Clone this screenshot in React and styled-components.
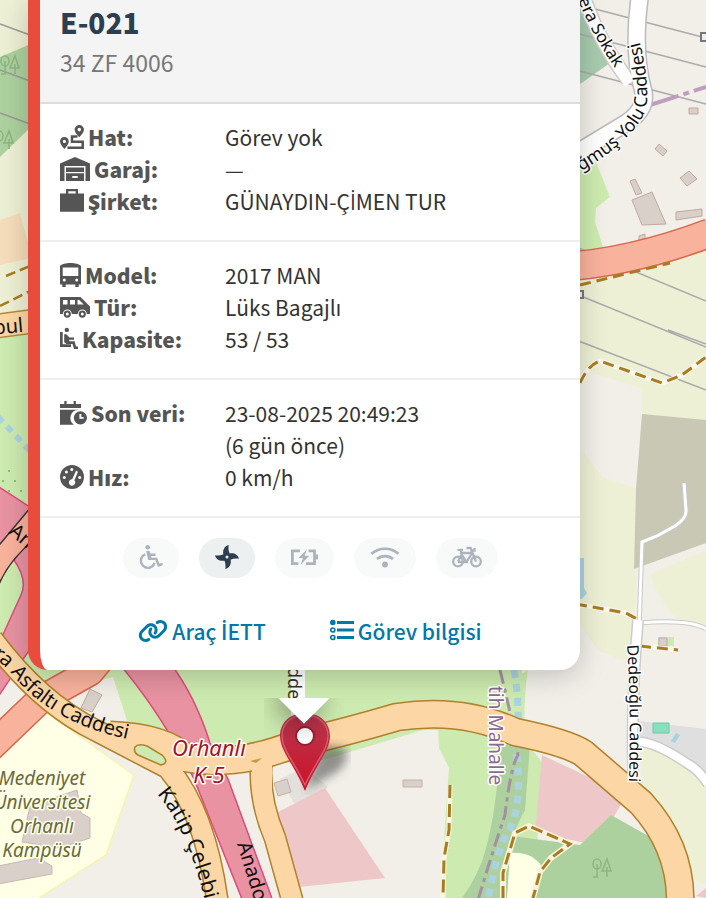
import React from 'react'
import styled, { createGlobalStyle } from 'styled-components'
import { FaLink } from 'react-icons/fa6'

const GlobalStyle = createGlobalStyle`
  * { box-sizing: border-box; }
  body {
    margin: 0;
    background: #f2efe9;
    font-family: "Noto Sans CJK SC", "Noto Sans", sans-serif;
    color: #333;
  }
`

const Page = styled.main`
  position: relative;
  min-height: 100vh;
  overflow: hidden;
`

const MapLayer = styled.svg`
  position: absolute;
  inset: 0;
  width: 100%;
  height: 100%;
  font-family: "Noto Sans", sans-serif;
`

const Popup = styled.div`
  position: relative;
  margin: 0 126px 0 28px;
`

const Card = styled.article`
  background: #fff;
  border-left: 12px solid #e74c3c;
  border-radius: 0 0 20px 20px;
  overflow: hidden;
  box-shadow: 0 6px 28px rgba(0, 0, 0, 0.2);
`

const Header = styled.header`
  padding: 6px 20px 24px;
  background: #f4f4f4;
  border-bottom: 2px solid #ddd;
`

const Title = styled.h1`
  margin: 0 0 8px;
  font-size: 28px;
  line-height: 32px;
  font-weight: 900;
  color: #2c3e50;
`

const Plate = styled.div`
  font-size: 23px;
  line-height: 32px;
  color: #777;
`

const Details = styled.dl`
  margin: 0;
  padding: 17px 20px 23px;
  border-bottom: 2px solid #eee;
  display: grid;
  grid-template-columns: 165px 1fr;
  font-size: 21px;
  line-height: 32px;
`

const Label = styled.dt`
  display: flex;
  align-items: flex-start;
  gap: 4px;
  font-weight: 900;
  color: #555;
  white-space: nowrap;
`

const Value = styled.dd`
  margin: 0;
`

const DottedI = styled.span`
  font-family: "Open Sans", sans-serif;
  font-weight: ${p => p.$weight || 400};
  line-height: 1;
`

const Glyph = styled.svg`
  flex-shrink: 0;
  height: 24px;
  width: ${p => p.$w}px;
  margin-top: 4px;
  fill: currentColor;
`

const Features = styled.ul`
  list-style: none;
  margin: 0;
  padding: 20px 20px 37px;
  display: flex;
  justify-content: center;
  gap: 20px;
`

const Pill = styled.li`
  height: 40px;
  padding: 3px 16px;
  border-radius: 20px;
  background: ${p => p.$on ? '#ecf0f1' : '#f8faf9'};
  color: ${p => p.$on ? '#2c3e50' : '#abb4bd'};
`

const Links = styled.nav`
  display: flex;
  justify-content: center;
  gap: 64px;
  padding: 0 20px 23px;
`

const Link = styled.a`
  display: flex;
  gap: 4px;
  font-size: 21px;
  line-height: 32px;
  font-weight: 500;
  color: #0078a8;
  text-decoration: none;
`

const TipBox = styled.div`
  width: 80px;
  height: 40px;
  margin: 28px auto 0;
  overflow: hidden;
`

const Tip = styled.div`
  width: 38px;
  height: 38px;
  margin: -20px auto 0;
  background: #fff;
  transform: rotate(45deg);
  box-shadow: 0 6px 28px rgba(0, 0, 0, 0.4);
`

const BLADE = 'M12 12 8.300 9.300C7.500 5 9.500 1 13.700 0c-.5 3-.3 5.800 1 8.500z'

const ICONS = {
  route: [24, <>
    <path fillRule="evenodd" d="M19.300 0a4.700 4.700 0 0 1 4.700 4.700c0 2.300-2.600 5.400-4.700 7.600-2.100-2.200-4.700-5.300-4.700-7.600A4.700 4.700 0 0 1 19.300 0zm0 2.800a1.800 1.800 0 1 0 0 3.600 1.800 1.800 0 0 0 0-3.600zM4.400 12a4.400 4.400 0 0 1 4.400 4.400c0 2.200-2.300 5.300-4.400 7.600C2.300 21.700 0 18.600 0 16.400A4.400 4.400 0 0 1 4.400 12zm0 2.800a1.600 1.600 0 1 0 0 3.200 1.600 1.600 0 0 0 0-3.200z" />
    <path d="M17.500 11.500H12v5.300h10.700v6H7.500" fill="none" stroke="currentColor" strokeWidth="2.500" />
  </>],
  warehouse: [30, <path fillRule="evenodd" d="M0 6.500 15 0l15 6.500V24h-4.500V9h-21v15H0zM6 10.500h18V15H6zM6 16.300h18V24H6zm6.300 2.700v2h5.400v-2z" />],
  briefcase: [24, <path fillRule="evenodd" d="M6 0h12v4.500h6V15H0V4.500h6zm2.300 2.200v2.300h7.400V2.200zM0 15h24v7.700H0z" />],
  bus: [21, <path fillRule="evenodd" d="M0 3C3-1 18-1 21 3v18.500h-2.300V24h-3.400v-2.500H5.700V24H2.300v-2.500H0zm2.700 1.500V13h15.600V4.500zM4.300 15.500a1.500 1.500 0 1 0 0 3 1.500 1.500 0 0 0 0-3zm12.400 0a1.500 1.500 0 1 0 0 3 1.500 1.500 0 0 0 0-3z" />],
  van: [30, <>
    <path fillRule="evenodd" d="M0 2h20.500L30 11.500V19h-3.200a4.500 4.500 0 0 0-9 0h-6a4.500 4.500 0 0 0-9 0H0zm3 3v4.500h4.500V5zm7 0v4.500h5V5zm7.500 0v4.500h6.200L19.300 5z" />
    <path fillRule="evenodd" d="M7.300 15.500a3.600 3.600 0 1 1 0 7.200 3.600 3.600 0 0 1 0-7.200zm0 2.100a1.500 1.500 0 1 0 0 3 1.500 1.500 0 0 0 0-3zM22.300 15.500a3.600 3.600 0 1 1 0 7.200 3.600 3.600 0 0 1 0-7.200zm0 2.100a1.500 1.500 0 1 0 0 3 1.500 1.500 0 0 0 0-3z" />
  </>],
  seat: [18, <>
    <circle cx="6.800" cy="2.900" r="2.200" />
    <path d="M0 5h2.700v12.300H11V20H0zM4.200 7.300h2.200l3 3.200H14v2.300H9.300v1.500h5.300l1.400 5.200h2V22h-4l-1.500-5H6.400l-2.200-1.800z" />
  </>],
  calendar: [27, <>
    <path d="M4.300 0h2.300v3h7V0h2.300v3H21v4H0V3h4.300zM0 8.800h18.500a8.200 8.200 0 0 0-4.600 14.900H0z" />
    <path fillRule="evenodd" d="M20.400 10.200a6.600 6.600 0 1 1 0 13.200 6.600 6.600 0 0 1 0-13.200zm-1 2.800v4.800h4.200v-1.900h-2.300V13z" />
  </>],
  gauge: [24, <>
    <circle cx="12" cy="12" r="12" />
    <g fill="#fff">
      <circle cx="4.300" cy="12.500" r="1.500" /><circle cx="6.400" cy="7" r="1.500" />
      <circle cx="11.800" cy="4.600" r="1.500" /><circle cx="19.700" cy="12.500" r="1.500" />
      <path d="m16 5.800 2 1-3.600 8.500a3.200 3.200 0 1 1-2.200-1z" />
    </g>
  </>],
  wheelchair: [24, <>
    <circle cx="8.700" cy="2.300" r="2.300" />
    <path d="M7.200 6h3.400l.7 2.600h5.200v2.300h-4.600l.5 1.900h5.700l2.300 6 2.800-1 .8 2.300-5 1.900-2.700-6.900H9.200z" />
    <path d="M6.300 9.300a7 7 0 1 0 9.300 8.600" fill="none" stroke="currentColor" strokeWidth="2.300" />
  </>],
  fan: [24, <>
    {[0, 90, 180, 270].map(a => <path key={a} d={BLADE} transform={`rotate(${a} 12 12)`} />)}
    <circle cx="12" cy="12" r="4" />
    <circle cx="12" cy="12" r="1.500" fill="#ecf0f1" />
  </>],
  battery: [27, <>
    <path d="M9 5.800H1.400v12.800h6M17.500 5.800h6v12.800H15" fill="none" stroke="currentColor" strokeWidth="2.800" />
    <path d="M24.500 9.500H27v5h-2.500zM15.800 4.400 7.500 13h4.400l-2.300 6.800 8.700-9h-4.700z" />
  </>],
  wifi: [30, <>
    <path d="M1.500 8.800a20.500 20.500 0 0 1 27 0M7 14a12.500 12.500 0 0 1 16 0" fill="none" stroke="currentColor" strokeWidth="2.700" />
    <circle cx="15" cy="19.500" r="2.900" />
  </>],
  bike: [30, <g fill="none" stroke="currentColor" strokeWidth="2.300">
    <circle cx="6" cy="16.500" r="4.800" /><circle cx="24" cy="16.500" r="4.800" />
    <path d="M6 16.500 10.500 8H21M9.500 9.500l5 7.500H6M14.500 17 20.500 7.500M24 16.500 18.500 3H14.500M5.500 4.800H11M9 5v4M18.500 5.500h4V3" />
  </g>],
  list: [24, <>
    <path d="M7 2h17v3H7zm0 7.500h17v3H7zM7 17h17v3H7z" />
    <circle cx="2.800" cy="3.500" r="2.800" />
    <g fill="none" stroke="currentColor" strokeWidth="1.700"><circle cx="2.800" cy="11" r="2" /><circle cx="2.800" cy="18.500" r="2" /></g>
  </>],
}

function Icon({ name }) {
  const [w, shape] = ICONS[name]
  return <Glyph $w={w} viewBox={`0 0 ${w} 24`} aria-hidden="true">{shape}</Glyph>
}

const GROUPS = [
  [
    ['route', 'Hat:', 'Görev yok'],
    ['warehouse', 'Garaj:', '—'],
    ['briefcase', 'Şirket:', <>GÜNAYDIN-Ç<DottedI>İ</DottedI>MEN TUR</>],
  ],
  [
    ['bus', 'Model:', '2017 MAN'],
    ['van', 'Tür:', 'Lüks Bagajlı'],
    ['seat', 'Kapasite:', '53 / 53'],
  ],
  [
    ['calendar', 'Son veri:', <>23-08-2025 20:49:23<br />(6 gün önce)</>],
    ['gauge', 'Hız:', '0 km/h'],
  ],
]

const FEATURES = [
  ['wheelchair', false], ['fan', true], ['battery', false], ['wifi', false], ['bike', false],
]

function Road({ d, w, fill, edge }) {
  return (
    <g fill="none" strokeLinejoin="round">
      <path d={d} stroke={edge} strokeWidth={w + 3} />
      <path d={d} stroke={fill} strokeWidth={w} />
    </g>
  )
}

const RoadName = styled.text`
  font-size: ${p => p.$size || 20}px;
  fill: ${p => p.$color || '#111'};
  stroke: ${p => p.$halo || 'none'};
  stroke-width: 3px;
  stroke-linejoin: round;
  paint-order: stroke;
`

const AreaName = styled(RoadName)`
  font-style: italic;
  text-anchor: middle;
`

function Trees({ x, y }) {
  return (
    <g transform={`translate(${x} ${y})`} fill="none" stroke="#8db582" strokeWidth="1.500">
      <ellipse cx="5" cy="6" rx="4" ry="5" /><path d="M5 6v13M1 19h5M15 1l-5 12h9zM15 9v10" />
    </g>
  )
}

function StreetMap() {
  return (
    <MapLayer viewBox="0 0 706 898" preserveAspectRatio="xMinYMin slice" aria-label="Harita">
      <defs>
        <path id="asfalti" d="M-8 656Q4 665 12 674Q56 730 155 744" />
        <path id="katip" d="M157 794Q194 836 212 935" />
        <path id="anadolu" d="M237 844L262 925" />
        <path id="sokak" d="M575 -8Q590 34 626 84" />
        <path id="yolu" d="M581 171Q632 142 646 110Q652 68 626 0" />
        <path id="dede" d="M627 645Q632 720 628 800" />
        <linearGradient id="pin" x1="0" y1="0" x2="0" y2="1">
          <stop offset="0" stopColor="#b8384f" /><stop offset="1" stopColor="#cc1128" />
        </linearGradient>
        <filter id="soft"><feGaussianBlur stdDeviation="5" /></filter>
      </defs>

      <rect width="706" height="898" fill="#f2efe9" />

      {/* land cover, west side */}
      <path fill="#eef0d5" d="M0 0h40v320H0z" />
      <path fill="#add19e" d="M0 57 40 40v78L0 157z" />
      <path fill="#f5dcba" d="m0 220 20-7 12 45-32 7z" />
      <path fill="#cdebb0" d="M0 325h60v340h462v100H300L160 742 60 722 0 660z" />
      <path d="m0 24 30 11M0 70l30 11M0 113l30 11" stroke="#999" strokeWidth="1.500" />
      <Trees x="0" y="55" /><Trees x="-6" y="130" />
      <g fill="none" stroke="#a87c20" strokeWidth="2.500" strokeDasharray="10 5">
        <path d="m6 276 24-10M0 306l30-15" />
      </g>
      <Road d="M-10 327 50 319" w={22} fill="#fcd6a4" edge="#b58a3a" />
      <RoadName x="-6" y="334" transform="rotate(-5 0 334)">bul</RoadName>
      <path d="m-2 417 36 38" stroke="#aad3df" strokeWidth="6" strokeDasharray="7 6" />
      <g fill="#7cae68">
        <circle cx="9" cy="471" r="1" /><circle cx="3" cy="481" r="1" /><circle cx="15" cy="481" r="1" />
        <circle cx="9" cy="491" r="1" /><circle cx="21" cy="491" r="1" />
      </g>
      <path fill="#e892a2" stroke="#dc4b7c" strokeWidth="1.500" d="M-4 485 36 511v24L-4 554z" />
      <path fill="#e892a2" stroke="#dc4b7c" strokeWidth="1.500" d="M14 560q14 20 7 35L-4 650v50L36 640V530z" />
      <path fill="#f9b29c" stroke="#333" strokeWidth="1.500" d="m-4 549 40-48v37Q6 562-4 592z" />
      <RoadName x="8" y="533" transform="rotate(40 8 533)">An</RoadName>

      {/* land cover, south side */}
      <path fill="#f2efe9" d="m60 691 53-14 16 50-60-10zM173 780l80-5 40 123H200z" />
      <path fill="#ffffe5" stroke="#f7f3b0" strokeWidth="1.500" d="m40 708 94 67-28 80-70 45H-4V750z" />
      <path fill="#d9d0c9" stroke="#c8b9af" d="m30 806 47-16 4 23 9 5v20l-30 10-38-6zM-2 866l40-8 14 8v8L-2 884z" />
      <path fill="#d9d0c9" stroke="#bdaaa0" d="m90 689 12 6-10 17-11-4z" />
      <path fill="#f2efe9" d="m273 775 150-45 17 0 10 20v150H295z" />
      <path fill="#e4e1dc" d="m280 779 25-12 23 20-31 21z" />
      <path fill="#d9d0c9" stroke="#c2b2a8" d="m274 783 13-4 4 13-13 4zM403 780h19v7h-19z" />
      <path fill="#eec8c9" d="m276 813 49-25 60 90-86 9z" />
      <path fill="#cdebb0" d="m438 726 90-56q-5 30-3 70l19 25-12 133h-91q4-80 8-130l-10-20z" />
      <path fill="#add19e" d="M500 745h30l-5 65q-20 35-24 88h-39q18-25 24-50 11-40 14-103z" />
      <path fill="#eec8c9" d="m542 755 85 40-16 26-25 22-51-10z" />
      <path fill="#add19e" d="m505 835 75 10 31-30 50 28q18 30 10 60H495z" />
      <path fill="#ffffe5" d="M510 853q22-2 32 14l-11 31h-24z" />
      <Trees x="592" y="858" />
      <path d="m450 785-1 45-5 28-1 40" fill="none" stroke="#fbf6e0" strokeWidth="5" />
      <path d="m450 785-1 45-5 28-1 40" fill="none" stroke="#a87c20" strokeWidth="3" strokeDasharray="13 6" />
      <path d="M503 898v-25l12-40 14-7 41 18-19 14-11 14-7 26" fill="none" stroke="#f7f3dc" strokeWidth="6" />
      <path d="M503 898v-25l12-40 14-7 41 18-19 14-11 14-7 26" fill="none" stroke="#a87c20" strokeWidth="3" strokeDasharray="12 5" />

      {/* land cover, east side */}
      <path fill="#a8cbae" d="M576 0h14l24 60-38 27z" />
      <path fill="#cdebb0" d="m576 170 20-8 14 35-14 11-1 14 8 25-27 7z" />
      <path fill="#eef0d5" d="M560 284 706 248v174l-64-7V388l-62-18z" />
      <path fill="#eef0d5" d="m582 450 20 27 36 12-4 170-14 1-21-9-29-40z" />
      <path fill="#c8c8b5" d="m642 414 64 6v123l-72 26 2-80z" />
      <path fill="#eef0d5" d="m650 574 56-24v80l-30-12q-16-15-26-44z" />
      <path fill="#aad3df" d="M575 558h9v30l3 5-5 6h-7z" />
      <path fill="#dfdfdf" d="m638 721 68 8v54l-56-36-12-12z" />
      <path fill="#87e0be" stroke="#71c6a7" d="M653 723h16v10h-16z" />
      <path fill="#aad3df" d="m676 733 4 2-5 8-4-2z" />
      <path fill="#eef0d5" d="m640 747 18 0 48 38v100l-25-10-38-80z" />
      <path fill="#eec8c9" d="m696 896 10-8v10z" />
      <path fill="#cdebb0" d="M658 637h16v9h-16z" />
      <g fill="#d9d0c9" stroke="#c2a99c">
        <path d="m659 144 8 7-4 5-8-7zM689 171l8 8-10 7-7-8zM632 200l20-8 14 32-24 1zM630 181l5-2 7 14-6 2zM676 212l26-3v7l-26 4zM689 108h9v6h-9zM659 638h8v8h-8zM639 236l6-2v5l-6 2z" />
      </g>

      <g fill="none" stroke="#aaa" strokeWidth="1.500">
        <path d="m576 4 130 34M576 33l130 34M576 70l130 34M576 247l130 54M576 294l130 53M576 340l130 50M668 330l38 14" />
      </g>
      <g fill="#eee" stroke="#777" strokeWidth="2"><path d="M701 33h8v8h-8zM576 291h7v7h-7z" /></g>
      <path d="m650 105 56-18" stroke="#bd9fbd" strokeWidth="4" strokeDasharray="30 5 6 5" />
      <g fill="none">
        <path d="M583-5q15 45 45 85" stroke="#ccc" strokeWidth="15" />
        <path d="M640-5q-8 55 3 95 5 20-20 35L570 157" stroke="#bbb" strokeWidth="19" />
        <path d="M583-5q15 45 47 88" stroke="#fff" strokeWidth="12" />
        <path d="M640-5q-8 55 3 95 5 20-20 35L570 157" stroke="#fff" strokeWidth="16" />
      </g>
      <Road d="M560 267q70-4 150-34" w={27} fill="#f9b29c" edge="#d5684d" />
      <g fill="none" strokeWidth="5" stroke="#faf7ef">
        <path d="m580 383q8-18 20-22l62 22 20-8 24-18M576 604l50 9 11 6M640 646l38 4" />
      </g>
      <g fill="none" strokeWidth="3" stroke="#a87c20" strokeDasharray="11 6">
        <path d="m580 383q8-18 20-22l62 22 20-8 24-18M576 604l50 9 11 6M640 646l38 4M580 285l90-22" />
      </g>
      <g fill="none" stroke="#c9c9c9" strokeWidth="5"><path d="M639 630 642 542l15-6 18-10q12-8 11-16l-2-27M640 623q50-4 66 6" /></g>
      <g fill="none" stroke="#fff" strokeWidth="3"><path d="M639 630 642 542l15-6 18-10q12-8 11-16l-2-27M640 623q50-4 66 6" /></g>
      <Road d="M638 620q-8 90-4 180" w={9} fill="#fff" edge="#ccc" />
      <Road d="M638 742q16-1 50 22 10 5 20 20" w={8} fill="#fff" edge="#ccc" />

      <path d="M514 670q7 40 2 80 8 60-10 85-10 20-18 65" fill="none" stroke="#aad3df" strokeWidth="7" strokeDasharray="8 6" />
      <path d="M500 670q16 65 18 85-7 10-13 60-12 35-27 85" fill="none" stroke="#a48fa3" strokeWidth="3" strokeDasharray="14 5 4 5" />
      <path d="M298 665v62" stroke="#fff" strokeWidth="14" />

      {/* motorway and primary roads */}
      <Road d="M-10 748 40 700 90 672 100 660" w={26} fill="#f9b29c" edge="#d5684d" />
      <path fill="#e892a2" stroke="#dc4b7c" strokeWidth="1.500" d="M116 660q45 52 78 119l50 125h30L228 779 210 743Q195 695 168 660z" />
      <Road d="M262 756q-5 40 13 82l18 65" w={20} fill="#fcd6a4" edge="#b0802a" />
      <g fill="none" strokeLinejoin="round">
        <path d="M-8 639Q40 703 95 730L168 768Q206 813 218 905" stroke="#b0802a" strokeWidth="23" />
        <path d="M110 735q55 2 75 23 50 10 110-14 55-13 102-27 65-10 118 15 50 10 68 21l58 50q42 46 39 105" stroke="#b0802a" strokeWidth="29" />
        <path d="M-8 639Q40 703 95 730L168 768Q206 813 218 905" stroke="#fcd6a4" strokeWidth="20" />
        <path d="M110 735q55 2 75 23 50 10 110-14 55-13 102-27 65-10 118 15 50 10 68 21l58 50q42 46 39 105" stroke="#fcd6a4" strokeWidth="26" />
        <path d="M262 750v40" stroke="#fcd6a4" strokeWidth="20" />
      </g>
      <path fill="#cdebb0" stroke="#b0802a" strokeWidth="1.500" d="M135 747q3-4 12-1l15 9q8 8-1 10l-23-10q-5-3-3-8z" />
      <path fill="#c59b43" d="m250 761 12-3-6 5z" />

      <RoadName><textPath href="#asfalti">ra Asfaltı Caddesi</textPath></RoadName>
      <RoadName $size={21}><textPath href="#katip">Katip Çelebi C</textPath></RoadName>
      <RoadName><textPath href="#anadolu">Anadol</textPath></RoadName>
      <RoadName $size={17} $halo="#fff"><textPath href="#sokak">vera Sokak</textPath></RoadName>
      <RoadName $size={18} $halo="#fff"><textPath href="#yolu">ğmuş Yolu Caddesi</textPath></RoadName>
      <RoadName $size={16} $halo="#fff"><textPath href="#dede">Dedeoğlu Caddesi</textPath></RoadName>
      <RoadName $size={18} $color="#333" transform="translate(288 667) rotate(90)">dde</RoadName>
      <RoadName $size={19} $color="#8a6a8f" $halo="#fff" transform="translate(489 686) rotate(90)">tih Mahalle</RoadName>
      <AreaName x="209" y="756" $size={22} $color="#a51226" $halo="#fff">Orhanlı</AreaName>
      <AreaName x="209" y="783" $size={22} $color="#a51226" $halo="#fff">K-5</AreaName>
      <AreaName x="42" y="785" $size={19} $color="#6b6b2f" $halo="#fffff0">Medeniyet</AreaName>
      <AreaName x="42" y="809" $size={19} $color="#6b6b2f" $halo="#fffff0">Üniversitesi</AreaName>
      <AreaName x="42" y="833" $size={19} $color="#6b6b2f" $halo="#fffff0">Orhanlı</AreaName>
      <AreaName x="42" y="857" $size={19} $color="#6b6b2f" $halo="#fffff0">Kampüsü</AreaName>

      {/* vehicle marker */}
      <path d="m305 790 16-46 24 4q6 12-8 24z" fill="#333" opacity=".5" filter="url(#soft)" />
      <path d="M305 713c14 0 25 9 25 23 0 15-14 28-25 55-11-27-25-40-25-55 0-14 11-23 25-23z" fill="url(#pin)" />
      <path d="M305 715c13 0 23 8 23 21 0 14-12 25-23 49-11-24-23-35-23-49 0-13 10-21 23-21z" fill="none" stroke="#d75a6c" strokeWidth="1.500" />
      <circle cx="305" cy="736" r="9" fill="#fff" stroke="#982034" strokeWidth="2" />
    </MapLayer>
  )
}

export default function App() {
  return (
    <Page>
      <GlobalStyle />
      <StreetMap />
      <Popup>
        <Card>
          <Header>
            <Title>E-021</Title>
            <Plate>34 ZF 4006</Plate>
          </Header>
          {GROUPS.map((rows, i) => (
            <Details key={i}>
              {rows.map(([icon, label, value]) => (
                <React.Fragment key={label}>
                  <Label><Icon name={icon} />{label}</Label>
                  <Value>{value}</Value>
                </React.Fragment>
              ))}
            </Details>
          ))}
          <Features>
            {FEATURES.map(([name, on]) => (
              <Pill key={name} $on={on}><Icon name={name} /></Pill>
            ))}
          </Features>
          <Links>
            <Link href="#arac">
              <Glyph as={FaLink} $w={30} aria-hidden="true" />
              <span>Araç <DottedI $weight={600}>İ</DottedI>ETT</span>
            </Link>
            <Link href="#gorev"><Icon name="list" />Görev bilgisi</Link>
          </Links>
        </Card>
        <TipBox><Tip /></TipBox>
      </Popup>
    </Page>
  )
}
